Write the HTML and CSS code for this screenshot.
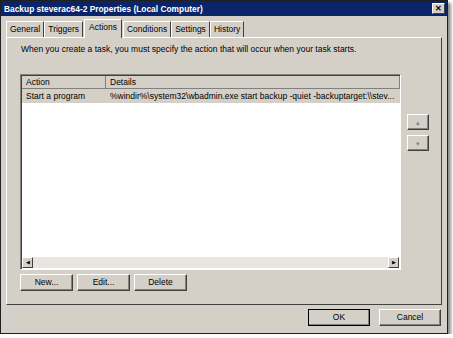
FILE: index.html
```html
<!DOCTYPE html>
<html lang="en">
<head>
  <meta charset="UTF-8" />
  <title>Backup steverac64-2 Properties (Local Computer)</title>
  <link rel="stylesheet" href="styles.css">
</head>
<body>
  <div class="window">
    <div class="titlebar">
      <span class="title">Backup steverac64-2 Properties (Local Computer)</span>
      <span class="close">&#x2715;</span>
    </div>

    <div class="content">
      <div class="tabs">
        <div class="tab">General</div>
        <div class="tab">Triggers</div>
        <div class="tab active">Actions</div>
        <div class="tab">Conditions</div>
        <div class="tab">Settings</div>
        <div class="tab">History</div>
      </div>

      <div class="panel">
        <p class="intro">When you create a task, you must specify the action that will occur when your task starts.</p>

        <div class="list-area">
          <div class="listview">
            <div class="list-head">
              <div class="col col-action">Action</div>
              <div class="col col-details">Details</div>
            </div>
            <div class="list-row selected">
              <div class="col col-action">Start a program</div>
              <div class="col col-details">%windir%\system32\wbadmin.exe start backup -quiet -backuptarget:\\stev...</div>
            </div>
            <div class="list-body"></div>
            <div class="hscroll">
              <div class="sbtn">&#9664;</div>
              <div class="strack"></div>
              <div class="sbtn">&#9654;</div>
            </div>
          </div>

          <div class="move-btns">
            <div class="btn small">&#9652;</div>
            <div class="btn small">&#9662;</div>
          </div>
        </div>

        <div class="action-btns">
          <div class="btn">New...</div>
          <div class="btn">Edit...</div>
          <div class="btn">Delete</div>
        </div>
      </div>

      <div class="footer">
        <div class="btn default">OK</div>
        <div class="btn">Cancel</div>
      </div>
    </div>
  </div>
</body>
</html>
```

FILE: styles.css
```css
body {
  margin: 0;
  background: #ffffff;
  font-family: "Liberation Sans", Arial, sans-serif;
  font-size: 8.5px;
  color: #000000;
}
.window {
  width: 446px;
  height: 332px;
  background: #d4d0c8;
  border: 1px solid #202020;
  box-shadow: 3px 3px 3px rgba(0,0,0,0.45);
}
.titlebar {
  height: 15px;
  background: #0a246a;
  color: white;
  display: flex;
  align-items: center;
  justify-content: space-between;
  padding: 0 2px 0 3px;
}
.title {
  font-weight: bold;
  font-size: 8.4px;
}
.close {
  width: 13px;
  height: 11px;
  background: #d4d0c8;
  color: #000;
  font-size: 8px;
  font-weight: bold;
  line-height: 9px;
  text-align: center;
  border: 1px solid;
  border-color: #fff #404040 #404040 #fff;
  box-sizing: border-box;
}
.content {
  padding: 3px 5px 0 5px;
}
.tabs {
  display: flex;
  align-items: flex-end;
  height: 18px;
}
.tab {
  height: 15px;
  line-height: 15px;
  padding: 0 3px;
  border: 1px solid;
  border-color: #fff #404040 transparent #fff;
  border-bottom: none;
}
.tab.active {
  height: 18px;
  line-height: 14px;
  padding: 0 4px;
  background: #d4d0c8;
  position: relative;
  top: 1px;
  margin: 0 1px;
}
.panel {
  height: 268px;
  border: 1px solid;
  border-color: #fff #404040 #404040 #fff;
  box-sizing: border-box;
  padding: 6px 0 0 13px;
}
.intro {
  margin: 0 0 20px 1px;
}
.list-area {
  display: flex;
}
.listview {
  width: 381px;
  height: 196px;
  background: white;
  border: 1px solid;
  border-color: #808080 #fff #fff #808080;
  box-shadow: inset 1px 1px 0 #404040;
  box-sizing: border-box;
  display: flex;
  flex-direction: column;
}
.list-head, .list-row {
  display: flex;
  height: 13px;
  line-height: 13px;
}
.list-head {
  margin: 1px 0 0 1px;
  background: #d4d0c8;
}
.list-head .col {
  border-right: 1px solid #808080;
  border-bottom: 1px solid #808080;
}
.col {
  padding-left: 4px;
  white-space: nowrap;
  overflow: hidden;
  box-sizing: border-box;
}
.col-action {
  width: 84px;
}
.col-details {
  width: 294px;
}
.list-row {
  margin-left: 1px;
  height: 14px;
  line-height: 14px;
}
.list-row.selected {
  background: #d4d0c8;
  width: 378px;
}
.list-body {
  flex: 1;
}
.hscroll {
  display: flex;
  height: 11px;
  margin: 0 1px 1px 1px;
}
.sbtn {
  width: 11px;
  background: #d4d0c8;
  font-size: 5px;
  line-height: 9px;
  text-align: center;
  box-sizing: border-box;
  border: 1px solid;
  border-color: #fff #404040 #404040 #fff;
}
.strack {
  flex: 1;
  background: #e8e6e1;
}
.move-btns {
  display: flex;
  flex-direction: column;
  gap: 5px;
  margin: 40px 0 0 6px;
}
.btn {
  width: 53px;
  height: 17px;
  line-height: 15px;
  text-align: center;
  border: 1px solid;
  border-color: #fff #404040 #404040 #fff;
  box-shadow: inset -1px -1px 0 #808080;
  box-sizing: border-box;
}
.btn.small {
  width: 22px;
  height: 16px;
  font-size: 7px;
  color: #808080;
}
.action-btns {
  display: flex;
  gap: 4px;
  margin-top: 4px;
}
.footer {
  display: flex;
  justify-content: flex-end;
  gap: 9px;
  padding: 4px 1px 0 0;
}
.footer .btn {
  width: 62px;
}
.btn.default {
  outline: 1px solid #000;
  outline-offset: -1px;
}
```
